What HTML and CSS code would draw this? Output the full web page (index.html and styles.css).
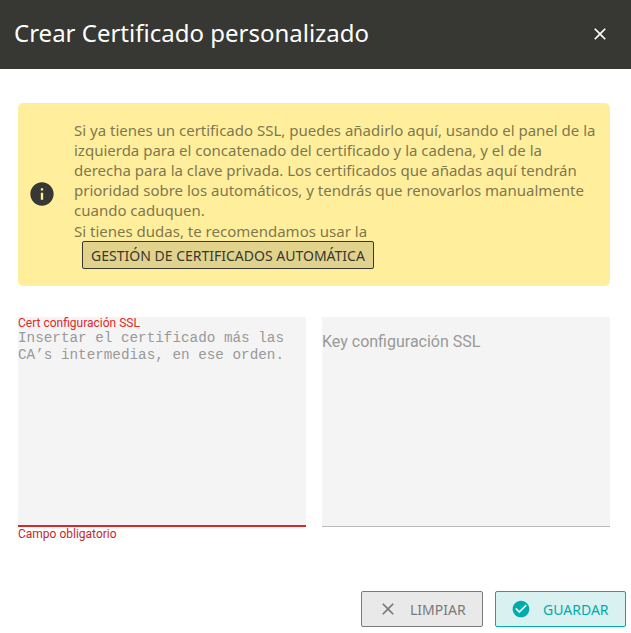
FILE: index.html
```html
<!DOCTYPE html>
<html lang="es">
<head>
<meta charset="utf-8">
<title>Crear Certificado personalizado</title>
<link rel="stylesheet" href="styles.css">
</head>
<body>
<div class="dialog">
  <header class="header">
    <h1 class="title">Crear Certificado personalizado</h1>
    <svg class="close" viewBox="0 0 24 24"><path d="M19 6.41 17.59 5 12 10.59 6.41 5 5 6.41 10.59 12 5 17.59 6.41 19 12 13.41 17.59 19 19 17.59 13.41 12z"/></svg>
  </header>
  <main class="content">
    <section class="notice">
      <svg class="info" viewBox="0 0 24 24"><path d="M12 2C6.48 2 2 6.48 2 12s4.480 10 10 10 10-4.480 10-10S17.520 2 12 2zm1 15h-2v-6h2v6zm0-8h-2V7h2v2z"/></svg>
      <div class="notice-text">
        <p>Si ya tienes un certificado SSL, puedes añadirlo aquí, usando el panel de la<br>izquierda para el concatenado del certificado y la cadena, y el de la<br>derecha para la clave privada. Los certificados que añadas aquí tendrán<br>prioridad sobre los automáticos, y tendrás que renovarlos manualmente<br>cuando caduquen.</p>
        <p class="doubt">Si tienes dudas, te recomendamos usar la</p>
        <button class="auto">GESTIÓN DE CERTIFICADOS AUTOMÁTICA</button>
      </div>
    </section>
    <div class="fields">
      <div class="field">
        <div class="area invalid">
          <label class="label-small">Cert configuración SSL</label>
          <p class="placeholder">Insertar el certificado más las<br>CA’s intermedias, en ese orden.</p>
        </div>
        <p class="error">Campo obligatorio</p>
      </div>
      <div class="field">
        <div class="area"><label class="label-large">Key configuración SSL</label></div>
      </div>
    </div>
  </main>
  <footer class="actions">
    <button class="action clear"><svg viewBox="0 0 24 24"><path d="M19 6.41 17.59 5 12 10.59 6.41 5 5 6.41 10.59 12 5 17.59 6.41 19 12 13.41 17.59 19 19 17.59 13.41 12z"/></svg><span>LIMPIAR</span></button>
    <button class="action save"><svg viewBox="0 0 24 24"><path d="M12 2C6.48 2 2 6.48 2 12s4.480 10 10 10 10-4.480 10-10S17.520 2 12 2zm-2 15-5-5 1.410-1.410L10 14.170l7.590-7.590L19 8l-9 9z"/></svg><span>GUARDAR</span></button>
  </footer>
</div>
</body>
</html>
```
FILE: styles.css
```css
* { box-sizing: border-box; }
body { margin: 0; background: #fff; font-family: "Noto Sans", sans-serif; }
p, h1 { margin: 0; font-weight: 400; }
svg { display: block; fill: currentColor; flex: none; }
button { font: 14px "Noto Sans", sans-serif; padding: 0; border-radius: 2px; white-space: nowrap; }
.dialog { width: 631px; height: 633px; display: flex; flex-direction: column; overflow: hidden; }
.header { height: 69px; flex: none; background: #373733; color: #fff; display: flex; align-items: center; justify-content: space-between; padding: 0 21px 2px 14px; }
.title { font-size: 24px; line-height: 32px; padding-bottom: 2px; }
.close { width: 20px; height: 20px; }
.content { padding: 34px 21px 0 18px; }
.notice { height: 183px; border-radius: 5px; background: #ffef9d; color: #7f774e; display: flex; padding: 17px 0 0 10px; }
.info { width: 28px; height: 28px; margin-top: 60px; color: #373733; }
.notice-text { margin-left: 18px; font-size: 15px; line-height: 20px; white-space: nowrap; }
.doubt { padding-top: 1px; }
.auto { display: block; width: 292px; height: 28px; margin: 0 0 0 8px; border: 1px solid #373733; background: #e2d38c; color: #373733; }
.fields { display: flex; gap: 16px; margin-top: 31px; }
.field { width: 288px; font-family: Roboto, sans-serif; }
.area { height: 210px; background: #f4f4f4; border-bottom: 1px solid #b9b9b9; }
.invalid { border-bottom: 2px solid #dc2626; }
.label-small { display: block; font-size: 12px; line-height: 12px; color: #e02828; }
.placeholder { padding-top: 1px; font: 14.3px/17px "Liberation Mono", monospace; color: #999; white-space: nowrap; }
.label-large { display: block; padding-top: 15px; font-size: 16px; line-height: 20px; color: #999; }
.error { font-size: 12px; line-height: 14px; color: #c62828; }
.actions { margin-top: auto; display: flex; justify-content: flex-end; gap: 12px; padding: 0 5px 6px 0; }
.action { height: 36px; display: flex; align-items: center; border: 1px solid; }
.action svg { width: 20px; height: 20px; }
.clear { width: 122px; padding-left: 16px; gap: 12px; color: #7a7a78; background: #e9e9e9; }
.save { width: 131px; padding-left: 15px; gap: 12px; color: #00acaa; background: #daf1f1; }
```
